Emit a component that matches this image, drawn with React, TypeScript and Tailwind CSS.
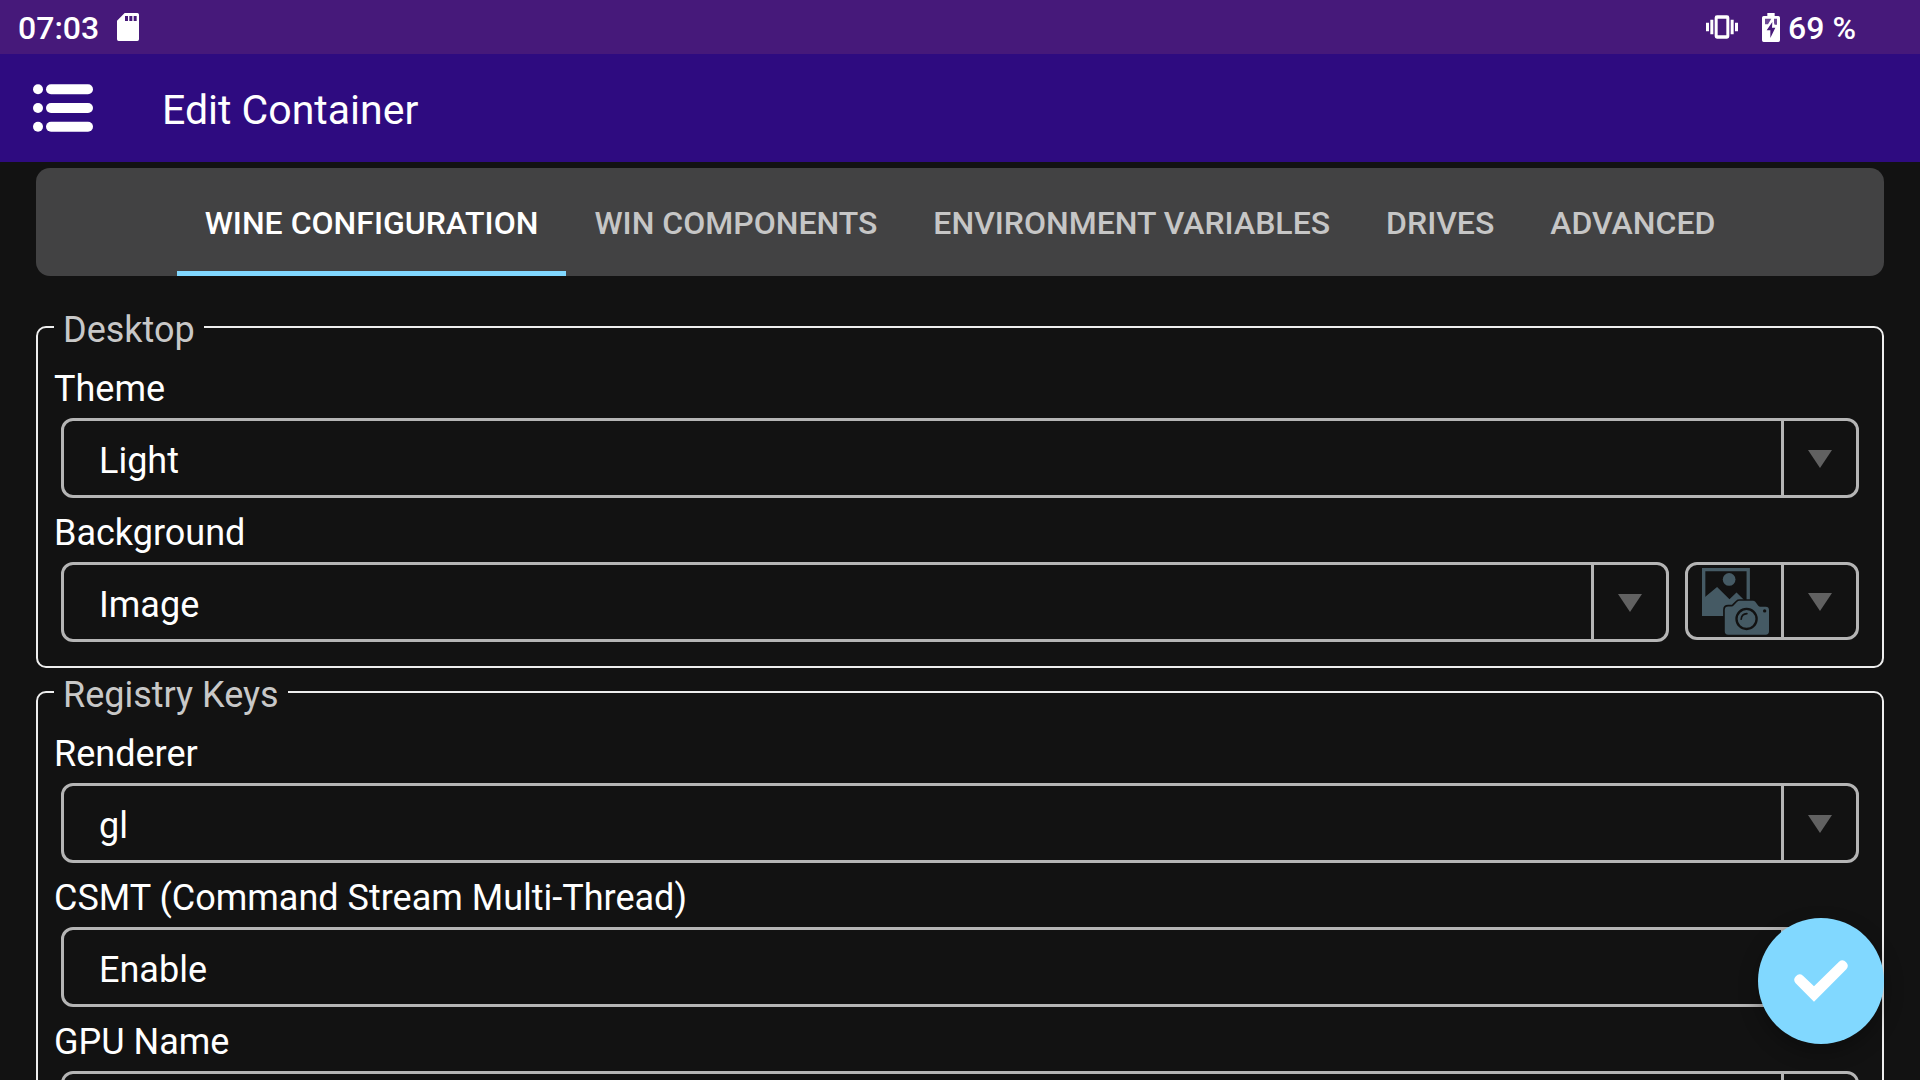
import { useState, type ReactNode } from "react";

const TABS = ["Wine Configuration", "Win Components", "Environment Variables", "Drives", "Advanced"];

function SdCardIcon() {
  return (
    <svg viewBox="0 0 66 84" className="h-7 w-[22px]" fill="currentColor" aria-hidden="true">
      <path
        fillRule="evenodd"
        d="M23 0H61Q66 0 66 5V79Q66 84 61 84H5Q0 84 0 79V23ZM24 9V24H33V9ZM37 9V24H46V9ZM50 9V24H59V9Z"
      />
    </svg>
  );
}

function VibrateIcon() {
  return (
    <svg viewBox="0 0 96 72" className="h-6 w-8" fill="currentColor" aria-hidden="true">
      <path d="M0 23h9v26H0zM13 14h9v44h-9zM74 14h9v44h-9zM87 23h9v26h-9z" />
      <path fillRule="evenodd" d="M33 1H63Q70 1 70 8V64Q70 71 63 71H33Q26 71 26 64V8Q26 1 33 1ZM35 11V61H61V11Z" />
    </svg>
  );
}

function BatteryIcon() {
  return (
    <svg viewBox="0 0 54 87" className="h-[29px] w-[18px]" aria-hidden="true">
      <path
        fill="currentColor"
        d="M16 0H38V9H49Q54 9 54 14V82Q54 87 49 87H5Q0 87 0 82V14Q0 9 5 9H16Z"
      />
      <path fill="#46197a" fillOpacity="0.8" d="M9 17H28L18 34H9ZM36 17H45V35H38L36 30Z" />
      <path fill="#46197a" d="M31 27L14 52H25V75L40 44H30Z" />
    </svg>
  );
}

function MenuIcon() {
  return (
    <svg viewBox="0 0 180 144" className="h-12 w-[60px]" fill="currentColor" aria-hidden="true">
      {[16, 72, 128].map((y) => (
        <g key={y}>
          <circle cx="15" cy={y} r="15" />
          <rect x="39" y={y - 15} width="141" height="30" rx="15" />
        </g>
      ))}
    </svg>
  );
}

function PickImageIcon() {
  return (
    <svg viewBox="0 0 200 200" className="size-[67px]" fill="#455a64" aria-hidden="true">
      <path fillRule="evenodd" d="M0 0H143V110H133V10H10V100H0Z" />
      <circle cx="81" cy="34" r="19" />
      <path d="M0 94L45 57L82 93L103 73L125 95L143 110V143H0Z" />
      <path
        d="M78 115H88Q92 115 95 111L105 101Q108 98 112 98H152Q156 98 159 101L168 113Q170 116 174 116H190Q200 116 200 126V189Q200 199 190 199H78Q68 199 68 189V125Q68 115 78 115Z"
        stroke="#121212"
        strokeWidth="10"
        paintOrder="stroke"
      />
      <circle cx="133" cy="152" r="30" fill="none" stroke="#121212" strokeWidth="7" />
      <path d="M117 153Q118 137 134 136" fill="none" stroke="#121212" strokeWidth="5" strokeLinecap="round" />
      <circle cx="187" cy="128" r="5" fill="#121212" />
    </svg>
  );
}

function ArrowBox() {
  return (
    <span className="flex w-[75px] items-center justify-center border-l-3 border-[#b5b5b5] pt-0.5">
      <svg viewBox="0 0 24 18" className="h-[18px] w-6" fill="#616161" aria-hidden="true">
        <path d="M0 0H24L12 18Z" />
      </svg>
    </span>
  );
}

function Spinner({ id, options }: { id: string; options: string[] }) {
  return (
    <div className="grid h-20 flex-1 rounded-xl border-3 border-[#b5b5b5]">
      <select
        id={id}
        className="col-start-1 row-start-1 appearance-none rounded-xl bg-transparent pt-1.5 pr-24 pl-[35px] text-4xl leading-[42px] text-white outline-none"
      >
        {options.map((option) => (
          <option key={option} className="bg-[#121212]">
            {option}
          </option>
        ))}
      </select>
      <div className="pointer-events-none col-start-1 row-start-1 flex justify-end">
        <ArrowBox />
      </div>
    </div>
  );
}

function Field({ id, label, options, extra }: { id: string; label: string; options: string[]; extra?: ReactNode }) {
  return (
    <div className="flex flex-col gap-2">
      <label htmlFor={id} className="text-4xl leading-[42px]">
        {label}
      </label>
      <div className="mx-[7px] flex items-start gap-4">
        <Spinner id={id} options={options} />
        {extra}
      </div>
    </div>
  );
}

function Group({ title, children }: { title: string; children: ReactNode }) {
  return (
    <fieldset className="rounded-[10px] border-2 border-[#eeeeee] px-4 pt-[17px] pb-6">
      <legend className="px-[9px] pt-1.5 text-4xl leading-[42px] text-[#c8c8c8]">{title}</legend>
      <div className="flex flex-col gap-3.5">{children}</div>
    </fieldset>
  );
}

export default function App() {
  const [active, setActive] = useState(TABS[0]);

  return (
    <div className="flex h-screen flex-col overflow-hidden bg-[#121212] font-[Roboto,sans-serif] text-white">
      <div className="flex h-[54px] shrink-0 items-center justify-between bg-[#46197a] pr-16 pl-[18px] text-[32px] leading-9 font-medium">
        <div className="flex items-center gap-[18px]">
          <span className="pt-0.5">07:03</span>
          <SdCardIcon />
        </div>
        <div className="flex items-center">
          <VibrateIcon />
          <span className="ml-6 flex items-center gap-2">
            <BatteryIcon />
            <span className="pt-0.5">69 %</span>
          </span>
        </div>
      </div>

      <header className="flex h-[108px] shrink-0 items-center bg-[#2e0b80] pl-[33px]">
        <button type="button" aria-label="Open menu">
          <MenuIcon />
        </button>
        <h1 className="ml-[69px] pt-1 text-[41px] leading-[50px]">Edit Container</h1>
      </header>

      <main className="flex-1 overflow-y-auto px-9 pt-1.5 [scrollbar-width:none]">
        <div role="tablist" className="flex h-[108px] justify-center rounded-[14px] bg-[#424243]">
          {TABS.map((tab) => (
            <button
              key={tab}
              type="button"
              role="tab"
              aria-selected={tab === active}
              onClick={() => setActive(tab)}
              className={
                tab === active
                  ? "border-b-5 border-[#81d8ff] px-7 pt-[7px] text-[32px] leading-9 font-medium text-white uppercase"
                  : "border-b-5 border-transparent px-7 pt-[7px] text-[32px] leading-9 font-medium text-[#c6c6c6] uppercase"
              }
            >
              {tab}
            </button>
          ))}
        </div>

        <div className="mt-[27px] flex flex-col pb-9">
          <Group title="Desktop">
            <Field id="theme" label="Theme" options={["Light", "Dark"]} />
            <Field
              id="background"
              label="Background"
              options={["Image", "Color"]}
              extra={
                <button
                  type="button"
                  aria-label="Choose background image"
                  className="flex h-[78px] rounded-xl border-3 border-[#b5b5b5] pl-3.5"
                >
                  <span className="flex h-full items-center pr-3">
                    <PickImageIcon />
                  </span>
                  <span className="flex h-full">
                    <ArrowBox />
                  </span>
                </button>
              }
            />
          </Group>
          <Group title="Registry Keys">
            <Field id="renderer" label="Renderer" options={["gl", "gdi", "vulkan"]} />
            <Field id="csmt" label="CSMT (Command Stream Multi-Thread)" options={["Enable", "Disable"]} />
            <Field id="gpu" label="GPU Name" options={["NVIDIA GeForce GTX 480"]} />
          </Group>
        </div>
      </main>

      <button
        type="button"
        aria-label="Save container"
        className="fixed right-9 bottom-9 flex size-[126px] items-center justify-center rounded-full bg-[#81d8ff] shadow-[0_8px_20px_rgba(0,0,0,0.3)]"
      >
        <svg viewBox="0 0 162 126" className="h-[42px] w-[54px]" fill="white" aria-hidden="true">
          <path d="M5 70A16 16 0 0 1 27 47L60 79L135 5A16 16 0 0 1 157 28L60 125Z" />
        </svg>
      </button>
    </div>
  );
}
